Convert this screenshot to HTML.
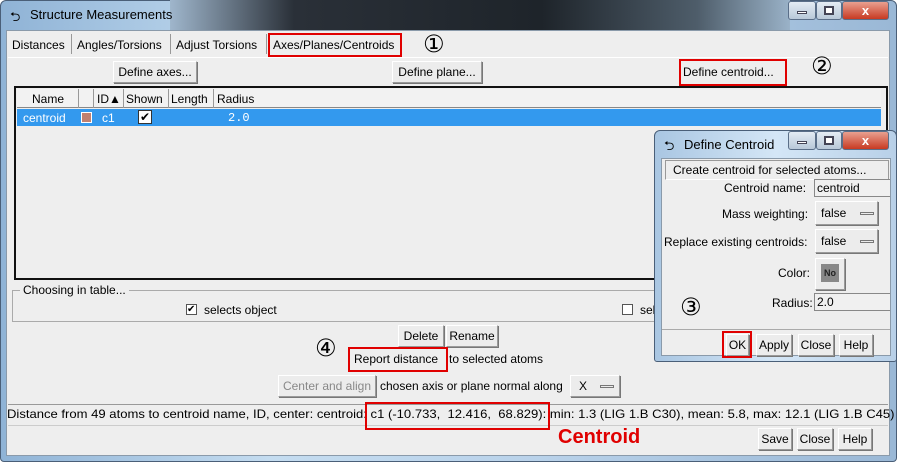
<!DOCTYPE html>
<html><head><style>
*{box-sizing:border-box;margin:0;padding:0}
body{width:900px;height:468px;background:#fff;position:relative;overflow:hidden;font-family:"Liberation Sans","DejaVu Sans",sans-serif;font-size:12px;color:#000}
.a{position:absolute}
.btn{position:absolute;background:#ececec;border:1px solid #9a9a9a;border-top-color:#fff;border-left-color:#fff;box-shadow:1px 1px 0 #777;text-align:center;font-size:12px;line-height:20px;white-space:nowrap}
.red{position:absolute;border:2px solid #e00000}
.circ{position:absolute;font-size:24px;line-height:24px}
.wc{position:absolute;height:19px;border:1px solid #5a6e88;border-radius:3px}
</style></head><body>
<div class="a" style="left:0;top:0;width:897px;height:462px;background:linear-gradient(90deg,#8fb3d6,#c4dcf0 30%,#b9d2ea 60%,#9ab8d6);border:1px solid #4a5f78;border-radius:6px 6px 4px 4px"></div>
<div class="a" style="left:170px;top:0;width:620px;height:30px;background:linear-gradient(90deg,#9fb6cc,#2a3038 20%,#1e242a 60%,#4e5d6a 85%,#9ab2c8)"></div>
<div class="a" style="left:10px;top:8px;font-size:13px">&#x2B8C;</div>
<div class="a" style="left:30px;top:7px;font-size:13px">Structure Measurements</div>
<div class="wc" style="left:788px;top:1px;width:28px;background:linear-gradient(#e4ecf4,#b8c8d8)"><div class="a" style="left:8px;top:9px;width:10px;height:3px;background:#fff;border:1px solid #445"></div></div>
<div class="wc" style="left:816px;top:1px;width:26px;background:linear-gradient(#e4ecf4,#b8c8d8)"><div class="a" style="left:7px;top:4px;width:10px;height:9px;border:2px solid #445;background:#fff"></div></div>
<div class="wc" style="left:842px;top:1px;width:47px;background:linear-gradient(#e8a090,#c83a22);color:#fff;font-weight:bold;text-align:center;font-size:13px;line-height:17px">x</div>
<div class="a" style="left:6px;top:30px;width:884px;height:426px;background:#eeeeee;border:1px solid #8a9aaa"></div>
<div class="a" style="left:12px;top:38px;font-size:12px">Distances</div>
<div class="a" style="left:71px;top:34px;width:1px;height:20px;background:#999"></div>
<div class="a" style="left:77px;top:38px">Angles/Torsions</div>
<div class="a" style="left:170px;top:34px;width:1px;height:20px;background:#999"></div>
<div class="a" style="left:176px;top:38px">Adjust Torsions</div>
<div class="a" style="left:266px;top:34px;width:1px;height:20px;background:#999"></div>
<div class="a" style="left:273px;top:38px">Axes/Planes/Centroids</div>
<div class="red" style="left:268px;top:33px;width:134px;height:24px"></div>
<div class="circ" style="left:423px;top:33px">①</div>
<div class="a" style="left:8px;top:57px;width:880px;height:1px;background:#fff"></div>
<div class="btn" style="left:113px;top:61px;width:84px">Define axes...</div>
<div class="btn" style="left:392px;top:61px;width:90px">Define plane...</div>
<div class="a" style="left:683px;top:65px">Define centroid...</div>
<div class="red" style="left:679px;top:59px;width:108px;height:27px"></div>
<div class="circ" style="left:811px;top:55px">②</div>
<div class="a" style="left:14px;top:86px;width:874px;height:194px;border:2px solid #111;background:#eeeeee"></div>
<div class="a" style="left:17px;top:89px;width:864px;height:19px;background:#f2f2f2;border-bottom:1px solid #888"></div>
<div class="a" style="left:32px;top:92px">Name</div>
<div class="a" style="left:78px;top:89px;width:1px;height:19px;background:#999"></div>
<div class="a" style="left:93px;top:89px;width:1px;height:19px;background:#999"></div>
<div class="a" style="left:97px;top:92px">ID▲</div>
<div class="a" style="left:123px;top:89px;width:1px;height:19px;background:#999"></div>
<div class="a" style="left:126px;top:92px">Shown</div>
<div class="a" style="left:168px;top:89px;width:1px;height:19px;background:#999"></div>
<div class="a" style="left:171px;top:92px">Length</div>
<div class="a" style="left:213px;top:89px;width:1px;height:19px;background:#999"></div>
<div class="a" style="left:217px;top:92px">Radius</div>
<div class="a" style="left:17px;top:109px;width:864px;height:17px;background:#3399ee"></div>
<div class="a" style="left:23px;top:111px;color:#fff">centroid</div>
<div class="a" style="left:81px;top:112px;width:11px;height:11px;background:#c08070;border:1px solid #fff"></div>
<div class="a" style="left:102px;top:111px;color:#fff">c1</div>
<div class="a" style="left:138px;top:110px;width:14px;height:14px;background:#fff;border:1px solid #333;font-size:12px;line-height:12px;text-align:center">✔</div>
<div class="a" style="left:228px;top:111px;color:#fff;font-family:'Liberation Mono',monospace">2.0</div>
<div class="a" style="left:12px;top:290px;width:880px;height:32px;border:1px solid #aaa;border-right:none"></div>
<div class="a" style="left:20px;top:283px;background:#eee;padding:0 3px">Choosing in table...</div>
<div class="a" style="left:186px;top:304px;width:11px;height:11px;border:1px solid #555;background:#fff;font-size:10px;line-height:9px">✔</div>
<div class="a" style="left:204px;top:303px">selects object</div>
<div class="a" style="left:622px;top:304px;width:11px;height:11px;border:1px solid #555;background:#fff"></div>
<div class="a" style="left:640px;top:303px">sel</div>
<div class="btn" style="left:398px;top:325px;width:46px">Delete</div>
<div class="btn" style="left:446px;top:325px;width:52px">Rename</div>
<div class="circ" style="left:315px;top:337px">④</div>
<div class="a" style="left:354px;top:352px">Report distance</div>
<div class="red" style="left:348px;top:347px;width:100px;height:25px"></div>
<div class="a" style="left:449px;top:352px">to selected atoms</div>
<div class="btn" style="left:278px;top:375px;width:98px;color:#888">Center and align</div>
<div class="a" style="left:380px;top:379px">chosen axis or plane normal along</div>
<div class="btn" style="left:570px;top:375px;width:50px;text-align:left;padding-left:8px">X <span style="display:inline-block;width:14px;height:3px;border:1px solid #777;margin-left:10px;vertical-align:middle"></span></div>
<div class="a" style="left:8px;top:404px;width:880px;height:22px;border-top:1px solid #999;border-bottom:1px solid #ccc"></div>
<div class="a" style="left:7px;top:407px;font-size:12px;white-space:nowrap;transform:scaleX(1.088);transform-origin:0 0">Distance from 49 atoms to centroid name, ID, center: centroid: c1 (-10.733,&nbsp; 12.416,&nbsp; 68.829): min: 1.3 (LIG 1.B C30), mean: 5.8, max: 12.1 (LIG 1.B C45)</div>
<div class="red" style="left:365px;top:402px;width:185px;height:28px"></div>
<div class="a" style="left:558px;top:426px;color:#e00000;font-size:20px;font-weight:bold">Centroid</div>
<div class="btn" style="left:758px;top:428px;width:34px">Save</div>
<div class="btn" style="left:797px;top:428px;width:36px">Close</div>
<div class="btn" style="left:838px;top:428px;width:34px">Help</div>
<div class="a" style="left:654px;top:130px;width:243px;height:232px;background:linear-gradient(90deg,#a9c6e2,#d4e6f6 50%,#b8d0e8);border:1px solid #4a5f78;border-radius:6px 6px 3px 3px"></div>
<div class="a" style="left:664px;top:137px;font-size:13px">&#x2B8C;</div>
<div class="a" style="left:684px;top:137px;font-size:13px">Define Centroid</div>
<div class="wc" style="left:788px;top:131px;width:28px;background:linear-gradient(#e4ecf4,#b8c8d8)"><div class="a" style="left:8px;top:9px;width:10px;height:3px;background:#fff;border:1px solid #445"></div></div>
<div class="wc" style="left:816px;top:131px;width:26px;background:linear-gradient(#e4ecf4,#b8c8d8)"><div class="a" style="left:7px;top:4px;width:10px;height:9px;border:2px solid #445;background:#fff"></div></div>
<div class="wc" style="left:842px;top:131px;width:47px;background:linear-gradient(#e8a090,#c83a22);color:#fff;font-weight:bold;text-align:center;font-size:13px;line-height:17px">x</div>
<div class="a" style="left:661px;top:158px;width:230px;height:198px;background:#eeeeee;border:1px solid #8a9aaa"></div>
<div class="a" style="left:665px;top:160px;width:224px;height:20px;border:1px solid #999;border-bottom-color:#fff"></div>
<div class="a" style="left:673px;top:163px">Create centroid for selected atoms...</div>
<div class="a" style="left:724px;top:181px">Centroid name:</div>
<div class="a" style="left:814px;top:179px;width:76px;height:18px;border:1px solid #888;border-right:none;background:#f0f0f0;padding-left:2px;line-height:16px">centroid</div>
<div class="a" style="left:722px;top:207px">Mass weighting:</div>
<div class="btn" style="left:815px;top:201px;width:63px;text-align:left;padding-left:5px;line-height:22px">false <span style="display:inline-block;width:14px;height:3px;border:1px solid #777;margin-left:10px;vertical-align:middle"></span></div>
<div class="a" style="left:664px;top:235px">Replace existing centroids:</div>
<div class="btn" style="left:815px;top:229px;width:63px;text-align:left;padding-left:5px;line-height:22px">false <span style="display:inline-block;width:14px;height:3px;border:1px solid #777;margin-left:10px;vertical-align:middle"></span></div>
<div class="a" style="left:778px;top:266px">Color:</div>
<div class="btn" style="left:815px;top:258px;width:30px;height:32px"><div style="margin:5px auto;width:18px;height:18px;background:#888;font-size:9px;font-weight:bold;line-height:18px;color:#222">No</div></div>
<div class="circ" style="left:680px;top:296px">③</div>
<div class="a" style="left:772px;top:296px">Radius:</div>
<div class="a" style="left:814px;top:293px;width:76px;height:18px;border:1px solid #888;border-right:none;background:#f0f0f0;padding-left:2px;line-height:16px">2.0</div>
<div class="a" style="left:662px;top:329px;width:228px;height:1px;background:#aaa"></div>
<div class="btn" style="left:726px;top:334px;width:23px">OK</div>
<div class="red" style="left:722px;top:331px;width:30px;height:27px"></div>
<div class="btn" style="left:756px;top:334px;width:36px">Apply</div>
<div class="btn" style="left:798px;top:334px;width:36px">Close</div>
<div class="btn" style="left:839px;top:334px;width:34px">Help</div>
</body></html>
